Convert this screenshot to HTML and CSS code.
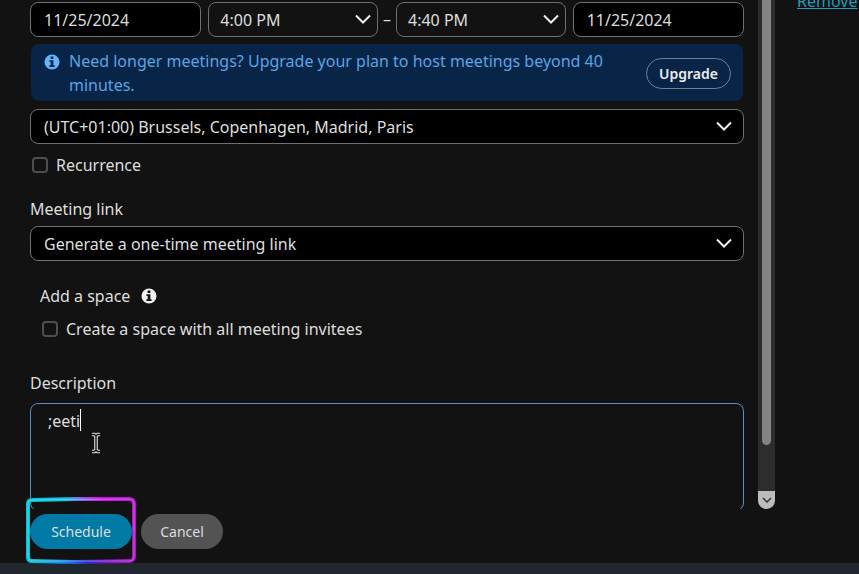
FILE: index.html
```html
<!DOCTYPE html>
<html lang="en">
<head>
    <meta charset="UTF-8">
    <meta name="viewport" content="width=device-width, initial-scale=1.0">
    <title>Schedule a meeting</title>
    <link rel="stylesheet" href="styles.css">
</head>
<body>
    <form class="scheduler">
        <div class="content">
            <div class="fields">
                <div class="date-row">
                    <input type="text" class="field date" aria-label="Start date" value="11/25/2024">
                    <div class="times">
                        <div class="select-wrap">
                            <select class="field time" aria-label="Start time">
                                <option>4:00 PM</option>
                            </select>
                            <svg class="chevron" viewBox="0 0 18 10"><path d="M2 1.5 9 8.5 16 1.5"/></svg>
                        </div>
                        <span class="dash">–</span>
                        <div class="select-wrap">
                            <select class="field time" aria-label="End time">
                                <option>4:40 PM</option>
                            </select>
                            <svg class="chevron" viewBox="0 0 18 10"><path d="M2 1.5 9 8.5 16 1.5"/></svg>
                        </div>
                    </div>
                    <input type="text" class="field date" aria-label="End date" value="11/25/2024">
                </div>

                <div class="banner">
                    <svg class="info" viewBox="0 0 16 16">
                        <circle cx="8" cy="8" r="7.5" fill="#64b4fa"/>
                        <path d="M6.6 2.6h2.8v2.3H6.6zM5.5 6.2h3.9v5h1.2v1.7H5.4v-1.7h1.3V7.9H5.5z" fill="#082548"/>
                    </svg>
                    <p class="banner-text">Need longer meetings? Upgrade your plan to host meetings beyond 40 minutes.</p>
                    <button type="button" class="upgrade">Upgrade</button>
                </div>

                <div class="select-wrap">
                    <select class="field" aria-label="Time zone">
                        <option>(UTC+01:00) Brussels, Copenhagen, Madrid, Paris</option>
                    </select>
                    <svg class="chevron" viewBox="0 0 18 10"><path d="M2 1.5 9 8.5 16 1.5"/></svg>
                </div>

                <div class="check-row">
                    <input type="checkbox" id="recurrence">
                    <label for="recurrence">Recurrence</label>
                </div>

                <label class="field-label" for="meeting-link">Meeting link</label>
                <div class="select-wrap">
                    <select class="field" id="meeting-link">
                        <option>Generate a one-time meeting link</option>
                    </select>
                    <svg class="chevron" viewBox="0 0 18 10"><path d="M2 1.5 9 8.5 16 1.5"/></svg>
                </div>

                <div class="space">
                    <div class="space-title">
                        <span>Add a space</span>
                        <svg class="info" viewBox="0 0 16 16">
                            <circle cx="8" cy="8" r="7.5" fill="#f2f2f2"/>
                            <path d="M6.6 2.6h2.8v2.3H6.6zM5.5 6.2h3.9v5h1.2v1.7H5.4v-1.7h1.3V7.9H5.5z" fill="#121212"/>
                        </svg>
                    </div>
                    <div class="check-row">
                        <input type="checkbox" id="create-space">
                        <label for="create-space">Create a space with all meeting invitees</label>
                    </div>
                </div>

                <label class="field-label" for="description">Description</label>
                <div class="description-wrap">
                    <textarea class="description" id="description">;eeti</textarea>
                    <span class="caret"></span>
                    <svg class="pointer" viewBox="0 0 12 22">
                        <path d="M2 2.5h2.5L6 4l1.5-1.5H10M6 4v14M2 19.5h2.5L6 18l1.5 1.5H10" fill="none" stroke="#e8e8e8" stroke-width="3.6"/>
                        <path d="M2 2.5h2.5L6 4l1.5-1.5H10M6 4v14M2 19.5h2.5L6 18l1.5 1.5H10" fill="none" stroke="#111" stroke-width="1.4"/>
                    </svg>
                </div>
            </div>

            <div class="scrollbar">
                <div class="thumb"></div>
                <button type="button" class="scroll-down" aria-label="Scroll down">
                    <svg viewBox="0 0 10 6"><path d="M1 1 5 5 9 1" fill="none" stroke="#333" stroke-width="1.5"/></svg>
                </button>
            </div>

            <aside class="side">
                <a class="remove" href="#">Remove</a>
            </aside>
        </div>

        <div class="actions">
            <div class="schedule-wrap">
                <button type="submit" class="pill primary">Schedule</button>
                <svg class="highlight" viewBox="0 0 112 68">
                    <defs>
                        <linearGradient id="top-glow" x1="0" x2="1" y1="0" y2="0">
                            <stop offset="0" stop-color="#00c4d4"/>
                            <stop offset="0.35" stop-color="#10c0e8"/>
                            <stop offset="0.55" stop-color="#9a50f0"/>
                            <stop offset="0.7" stop-color="#d010e8"/>
                            <stop offset="1" stop-color="#b814d0"/>
                        </linearGradient>
                        <linearGradient id="bottom-glow" x1="0" x2="1" y1="0" y2="0">
                            <stop offset="0" stop-color="#00c4d4"/>
                            <stop offset="0.3" stop-color="#1098f0"/>
                            <stop offset="0.55" stop-color="#3030d0"/>
                            <stop offset="0.75" stop-color="#8010c8"/>
                            <stop offset="1" stop-color="#a814c0"/>
                        </linearGradient>
                    </defs>
                    <path d="M3 34V8Q3 4 7 4L50 3 104 3Q109 3 109 8V34" stroke="url(#top-glow)"/>
                    <path d="M3 34V61Q3 65 7 65L50 66 104 65Q109 65 109 60V34" stroke="url(#bottom-glow)"/>
                    <path class="shine" d="M3 34V8Q3 4 8 4L104 3Q109 3 109 8V60Q109 65 104 65L8 65Q3 65 3 60Z"/>
                </svg>
            </div>
            <button type="button" class="pill">Cancel</button>
        </div>
    </form>
    <div class="taskbar"></div>
</body>
</html>
```

FILE: styles.css
```css
* {
    box-sizing: border-box;
}

body {
    display: flex;
    flex-direction: column;
    height: 100vh;
    margin: 0;
    overflow: hidden;
    background-color: #121212;
    color: #dedede;
    font-family: "Noto Sans", sans-serif;
    font-size: 16px;
    line-height: 24px;
}

.scheduler {
    flex: 1;
    display: flex;
    flex-direction: column;
    min-height: 0;
}

.content {
    flex: 1;
    display: flex;
    min-height: 0;
    overflow: hidden;
}

.fields {
    flex: 1;
    padding: 2px 14px 0 30px;
}

/* Inputs */
.field {
    display: block;
    width: 100%;
    height: 35px;
    padding: 0 13px;
    border: 1px solid #707070;
    border-radius: 8px;
    background-color: #000;
    color: inherit;
    font: inherit;
    appearance: none;
}

.select-wrap {
    position: relative;
}

.chevron {
    position: absolute;
    top: 12px;
    right: 11px;
    width: 18px;
    height: 10px;
    fill: none;
    stroke: #ececec;
    stroke-width: 2;
    pointer-events: none;
}

.date-row {
    display: flex;
    gap: 7px;
}

.date-row .date {
    width: 24%;
}

.times {
    flex: 1;
    display: flex;
}

.times .select-wrap {
    flex: 1;
}

.times .chevron {
    right: 6px;
}

.field.time {
    padding: 0 11px;
    background-color: #121212;
}

.dash {
    width: 18px;
    line-height: 34px;
    text-align: center;
}

/* Upgrade banner */
.banner {
    display: flex;
    align-items: center;
    margin: 7px 1px 8px;
    padding: 5px 12px 4px 13px;
    border-radius: 8px;
    background-color: #082548;
}

.info {
    width: 16px;
    height: 16px;
    flex-shrink: 0;
}

.banner .info {
    align-self: flex-start;
    margin-top: 5px;
}

.banner-text {
    flex: 1;
    margin: 0 24px 0 9px;
    color: #5ba3e4;
}

.upgrade {
    height: 31px;
    width: 85px;
    padding: 0;
    border: 1px solid #6f8094;
    border-radius: 16px;
    background: none;
    color: #ececec;
    font: 600 14px "Noto Sans", sans-serif;
}

/* Checkboxes and labels */
.check-row {
    display: flex;
    align-items: center;
    gap: 8px;
    margin-top: 9px;
    padding-left: 2px;
}

.check-row input {
    width: 16px;
    height: 16px;
    margin: 0;
    border: 2px solid #4e4e4e;
    border-radius: 4px;
    background-color: #121212;
    appearance: none;
}

.field-label {
    display: block;
    margin: 20px 0 5px;
}

.space {
    padding: 23px 10px 0;
}

.space-title {
    display: flex;
    align-items: center;
    gap: 11px;
}

.space + .field-label {
    margin: 30px 0 8px;
}

/* Description */
.description-wrap {
    position: relative;
}

.description {
    display: block;
    width: 100%;
    height: 108px;
    padding: 5px 17px;
    border: 1px solid #5b8fc4;
    border-radius: 8px;
    outline: none;
    background-color: #121212;
    color: inherit;
    font: inherit;
    resize: none;
}

.caret {
    position: absolute;
    top: 6px;
    left: 50px;
    width: 1px;
    height: 22px;
    background-color: #fff;
}

.pointer {
    position: absolute;
    top: 29px;
    left: 60px;
    width: 12px;
    height: 22px;
}

/* Scrollbar */
.scrollbar {
    display: flex;
    flex-direction: column;
    align-items: center;
    justify-content: space-between;
    width: 17px;
    border-radius: 0 0 9px 9px;
    background-color: #2d2d2d;
}

.thumb {
    width: 9px;
    height: 87.5%;
    border-radius: 0 0 5px 5px;
    background-color: #838383;
}

.scroll-down {
    display: flex;
    align-items: center;
    justify-content: center;
    width: 17px;
    height: 18px;
    padding: 0;
    border: none;
    border-radius: 0 0 9px 9px;
    background-color: #bcbcbc;
}

.scroll-down svg {
    width: 10px;
    height: 6px;
}

.side {
    width: 84px;
    padding-left: 22px;
}

.remove {
    display: block;
    margin-top: -11px;
    color: #1f9cb8;
    white-space: nowrap;
}

/* Bottom buttons */
.actions {
    display: flex;
    gap: 9px;
    padding: 5px 30px 14px;
}

.schedule-wrap {
    position: relative;
}

.pill {
    display: block;
    min-width: 82px;
    height: 35px;
    padding: 0 18px;
    border: none;
    border-radius: 18px;
    background-color: #535353;
    color: #dedede;
    font: 14px "Noto Sans", sans-serif;
}

.pill.primary {
    min-width: 102px;
    background-color: #017ba5;
}

.highlight {
    position: absolute;
    top: -18px;
    left: -5px;
    width: 112px;
    height: 68px;
    fill: none;
    stroke-width: 4;
    pointer-events: none;
}

.highlight .shine {
    stroke: #fff;
    stroke-opacity: 0.35;
    stroke-width: 1;
}

.taskbar {
    height: 11px;
    background-color: #20272e;
}
```
